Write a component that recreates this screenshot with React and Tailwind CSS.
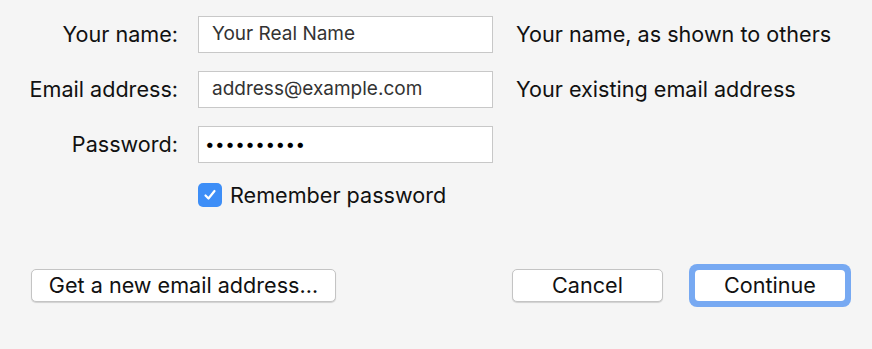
export default function App() {
  const font = { fontFamily: "Inter, 'Noto Sans', sans-serif" };
  return (
    <div className="w-[872px] h-[349px] bg-[#f5f5f5] text-[#111] relative" style={font}>
      <div className="pt-[16px] flex flex-col gap-[18px]">
        <div className="flex items-center h-[37px]">
          <div className="w-[178px] text-right text-[21.6px]">Your name:</div>
          <div className="ml-[20px] w-[295px] h-[37px] bg-white border border-[#c8c8c8] flex items-center pl-[13px] text-[19px] text-[#333]">Your Real Name</div>
          <div className="ml-[23px] text-[21.6px]">Your name, as shown to others</div>
        </div>
        <div className="flex items-center h-[37px]">
          <div className="w-[178px] text-right text-[21.6px]">Email address:</div>
          <div className="ml-[20px] w-[295px] h-[37px] bg-white border border-[#c8c8c8] flex items-center pl-[13px] text-[19px] text-[#333]">address@example.com</div>
          <div className="ml-[23px] text-[21.6px]">Your existing email address</div>
        </div>
        <div className="flex items-center h-[37px]">
          <div className="w-[178px] text-right text-[21.6px]">Password:</div>
          <div className="ml-[20px] w-[295px] h-[37px] bg-white border border-[#c8c8c8] flex items-center pl-[6px] text-[17px] tracking-[0.5px] text-black">••••••••••</div>
        </div>
      </div>
      <div className="flex items-center mt-[20px] ml-[198px] h-[24px]">
        <div className="w-[24px] h-[24px] rounded-[5px] bg-[#3d8ef7] flex items-center justify-center">
          <svg width="16" height="16" viewBox="0 0 16 16"><path d="M3.5 8.5 L6.5 11.5 L12.5 4" fill="none" stroke="white" strokeWidth="2.2" strokeLinecap="round" strokeLinejoin="round" /></svg>
        </div>
        <div className="ml-[8px] text-[21.6px]">Remember password</div>
      </div>
      <div className="flex items-center mt-[57px] pl-[31px] pr-[21px]">
        <button className="w-[305px] h-[33px] bg-white rounded-[5px] border border-[#c4c4c4] shadow-[0_1px_1px_rgba(0,0,0,0.15)] text-[21.6px] leading-none">Get a new email address…</button>
        <div className="flex-1" />
        <button className="w-[151px] h-[33px] bg-white rounded-[5px] border border-[#c4c4c4] shadow-[0_1px_1px_rgba(0,0,0,0.15)] text-[21.6px] leading-none">Cancel</button>
        <div className="ml-[26px] w-[162px] h-[43px] rounded-[8px] bg-[#77a9f2] p-[6px] flex">
          <button className="flex-1 bg-white rounded-[4px] text-[21.6px] leading-none">Continue</button>
        </div>
      </div>
    </div>
  );
}
